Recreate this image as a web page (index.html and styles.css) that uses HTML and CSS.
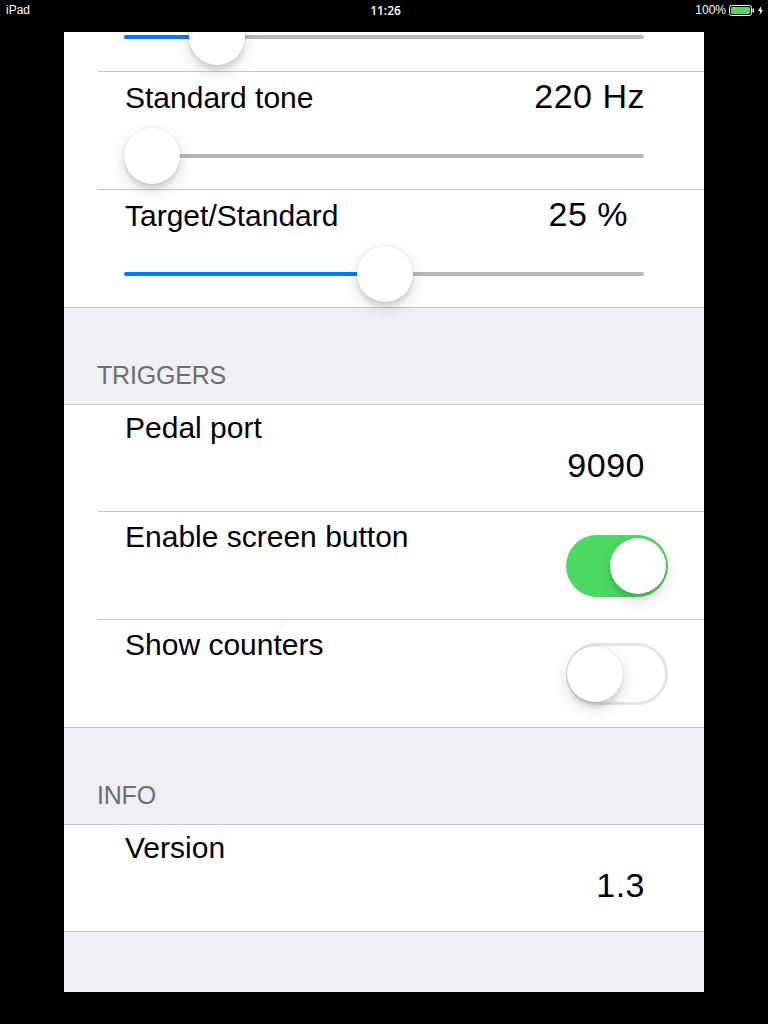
FILE: index.html
```html
<!DOCTYPE html>
<html lang="en">
<head>
<meta charset="utf-8">
<title>Settings</title>
<link rel="stylesheet" href="styles.css">
</head>
<body>
<header class="statusbar">
  <span class="sb-left">iPad</span>
  <span class="sb-time">11:26</span>
  <span class="sb-right">
    <span class="sb-pct">100%</span>
    <svg class="battery" width="26" height="11" viewBox="0 0 26 11"><rect x="0.5" y="0.5" width="22" height="10" rx="2" fill="none" stroke="#fff"/><rect x="2" y="2" width="19" height="7" rx="1" fill="#4cd964"/><rect x="23.5" y="3.5" width="1.5" height="4" fill="#fff"/></svg>
    <svg class="bolt" width="5" height="9" viewBox="0 0 5 9"><path d="M3.2 0 L0 5 H2.2 L1.6 9 L5 3.7 H2.8 Z" fill="#fff"/></svg>
  </span>
</header>

<main class="screen">
  <section class="group">
    <div class="row">
      <div class="cell cell-partial">
        <div class="slider" style="--v:0.14">
          <div class="track"><div class="fill"></div></div>
          <div class="thumb"></div>
        </div>
      </div>
    </div>
    <div class="row">
      <div class="cell cell-slider">
        <div class="line">
          <span class="label">Standard tone</span>
          <span class="value">220 Hz</span>
        </div>
        <div class="slider" style="--v:0">
          <div class="track"><div class="fill"></div></div>
          <div class="thumb"></div>
        </div>
      </div>
    </div>
    <div class="row">
      <div class="cell cell-slider">
        <div class="line">
          <span class="label">Target/Standard</span>
          <span class="value value-inset">25 %</span>
        </div>
        <div class="slider" style="--v:0.502">
          <div class="track"><div class="fill"></div></div>
          <div class="thumb"></div>
        </div>
      </div>
    </div>
  </section>

  <div class="section-header">TRIGGERS</div>

  <section class="group">
    <div class="row">
      <div class="cell cell-value">
        <span class="label">Pedal port</span>
        <span class="value">9090</span>
      </div>
    </div>
    <div class="row">
      <div class="cell cell-toggle">
        <span class="label">Enable screen button</span>
        <div class="switch on"><div class="knob"></div></div>
      </div>
    </div>
    <div class="row">
      <div class="cell cell-toggle">
        <span class="label">Show counters</span>
        <div class="switch off"><div class="knob"></div></div>
      </div>
    </div>
  </section>

  <div class="section-header">INFO</div>

  <section class="group">
    <div class="row">
      <div class="cell cell-value">
        <span class="label">Version</span>
        <span class="value">1.3</span>
      </div>
    </div>
  </section>
</main>
</body>
</html>
```

FILE: styles.css
```css
html, body {
  margin: 0;
  padding: 0;
}

body {
  background: #000;
  width: 768px;
  height: 1024px;
  overflow: hidden;
  font-family: "Liberation Sans", Arial, sans-serif;
  color: #000;
}

/* Status bar */
.statusbar {
  height: 20px;
  display: grid;
  grid-template-columns: 1fr auto 1fr;
  align-items: center;
  padding: 0 5px 0 6px;
  color: #fff;
  font-size: 12px;
}

.sb-left {
  justify-self: start;
}

.sb-time {
  font-family: "Open Sans", "Liberation Sans", sans-serif;
  font-weight: 600;
  margin-left: 2px;
}

.sb-right {
  justify-self: end;
  display: flex;
  align-items: center;
}

.sb-pct {
  margin-right: 3px;
}

.battery {
  display: block;
  margin-right: 3px;
}

.bolt {
  display: block;
}

/* Screen */
.screen {
  width: 640px;
  height: 960px;
  margin: 12px auto 0;
  background: #efeff4;
  overflow: hidden;
}

.group {
  background: #fff;
  border-bottom: 1px solid #c8c7cc;
}

.section-header + .group {
  border-top: 1px solid #c8c7cc;
}

.row {
  padding-left: 33px;
}

.cell {
  box-sizing: content-box;
  padding: 0 61px 0 28px;
  border-bottom: 1px solid #c8c7cc;
}

.row:last-child .cell {
  border-bottom: none;
}

.label {
  font-size: 30px;
  line-height: 36px;
  white-space: nowrap;
}

.value {
  font-size: 34px;
  line-height: 36px;
  letter-spacing: 0.5px;
  margin-right: -2px;
  white-space: nowrap;
}

.value-inset {
  margin-right: 15px;
}

/* Slider rows */
.cell-partial {
  height: 39px;
  display: flex;
  flex-direction: column;
}

.cell-partial .slider {
  margin-top: -23px;
}

.cell-slider {
  height: 111px;
  padding-top: 6px;
  display: flex;
  flex-direction: column;
}

.line {
  display: flex;
  justify-content: space-between;
  align-items: baseline;
}

.cell-slider .slider {
  margin-top: 12px;
}

.slider {
  position: relative;
  width: 520px;
  height: 56px;
  margin-left: -1px;
  display: flex;
  align-items: center;
  flex-shrink: 0;
}

.track {
  width: 100%;
  height: 4px;
  border-radius: 2px;
  background: #b7b7b7;
}

.fill {
  height: 100%;
  width: calc(28px + var(--v) * 464px);
  border-radius: 2px;
  background: #007aff;
}

.thumb {
  position: absolute;
  top: 0;
  left: calc(var(--v) * 464px);
  width: 56px;
  height: 56px;
  border-radius: 50%;
  background: #fff;
  box-shadow: 0 6px 2px rgba(0, 0, 0, 0.06), 0 6px 16px rgba(0, 0, 0, 0.15), 0 0 0 1px rgba(0, 0, 0, 0.05);
}

/* Value rows */
.cell-value {
  height: 101px;
  padding-top: 5px;
  display: flex;
  flex-direction: column;
}

.cell-value .label {
  align-self: flex-start;
}

.cell-value .value {
  align-self: flex-end;
  line-height: 38px;
}

/* Toggle rows */
.cell-toggle {
  height: 107px;
  display: flex;
  justify-content: space-between;
  align-items: center;
}

.cell-toggle .label {
  align-self: flex-start;
  padding-top: 7px;
}

.switch {
  box-sizing: border-box;
  width: 102px;
  height: 62px;
  border-radius: 31px;
  margin-right: -25px;
  display: flex;
  align-items: center;
}

.switch.on {
  background: #4cd964;
  justify-content: flex-end;
  padding: 0 2px;
}

.switch.off {
  background: #fff;
  border: 3px solid #e5e5e5;
  justify-content: flex-start;
}

.switch.off .knob {
  margin-left: -2px;
}

.knob {
  width: 56px;
  height: 56px;
  border-radius: 50%;
  background: #fff;
  box-shadow: 0 6px 2px rgba(0, 0, 0, 0.06), 0 6px 16px rgba(0, 0, 0, 0.15), 0 0 0 1px rgba(0, 0, 0, 0.05);
}

/* Section headers */
.section-header {
  height: 96px;
  box-sizing: border-box;
  padding: 52px 0 0 33px;
  font-size: 25px;
  line-height: 30px;
  color: #6d6d72;
  letter-spacing: -0.2px;
}
```
